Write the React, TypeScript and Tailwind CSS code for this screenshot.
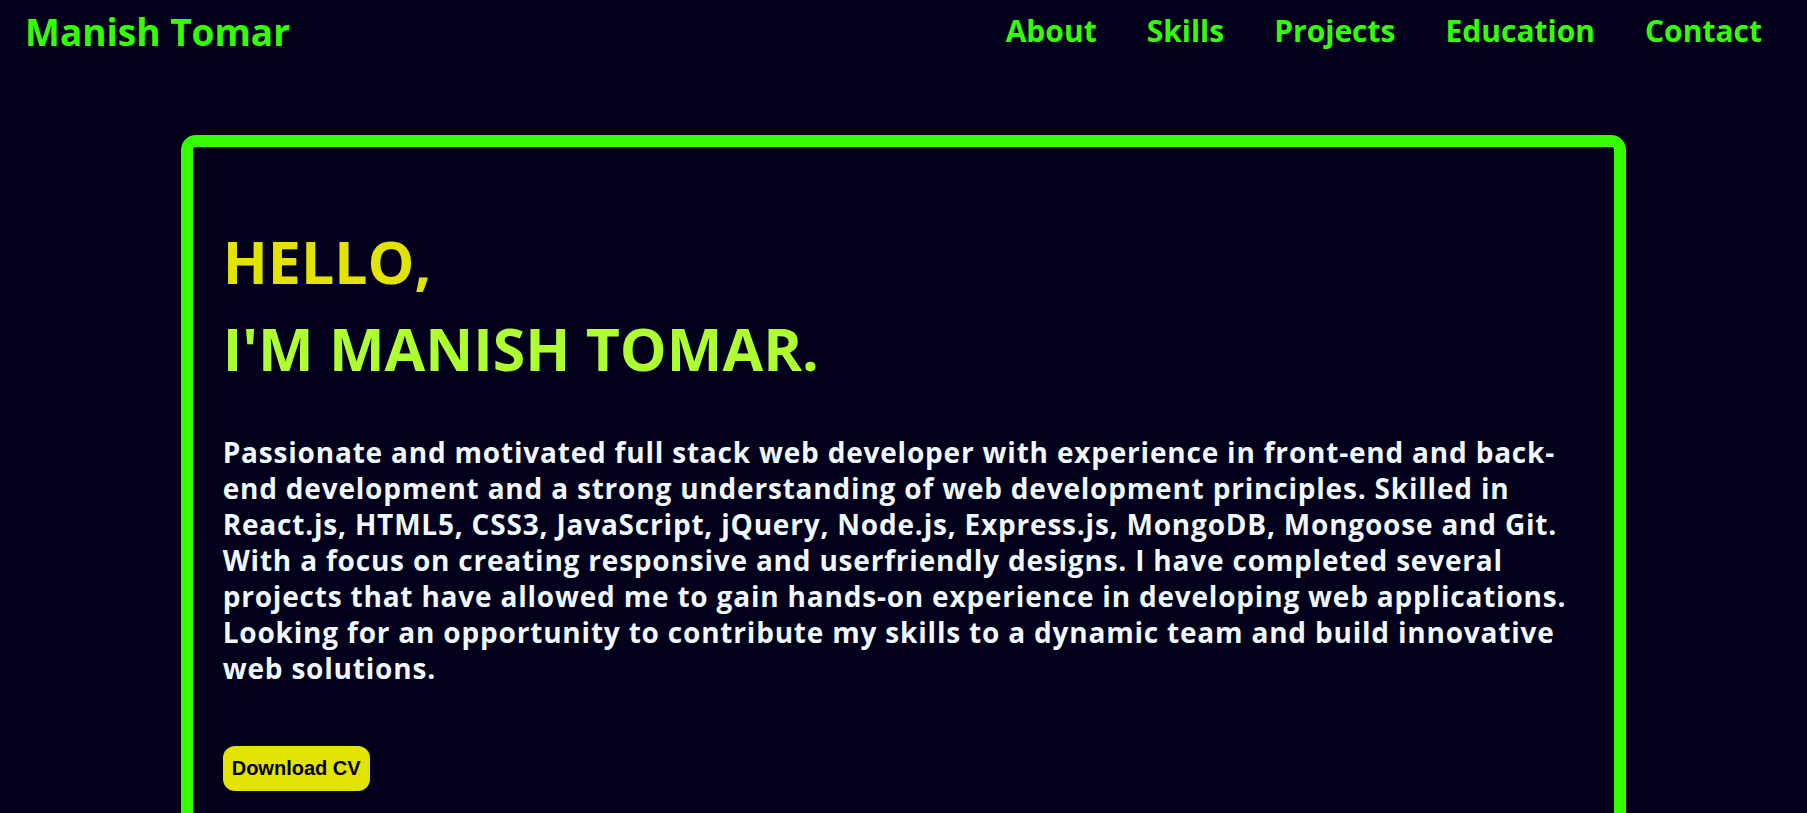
const navLinks = ["About", "Skills", "Projects", "Education", "Contact"];

export default function App() {
  return (
    <div className="min-h-screen bg-[#02001a] font-['Open_Sans',sans-serif] font-bold">
      <header className="flex h-[62px] items-center justify-between pl-[25px] pr-[45px]">
        <a href="#" className="text-[37px] leading-none text-[#33ff00]">
          Manish Tomar
        </a>
        <nav className="flex gap-[50px]">
          {navLinks.map((link) => (
            <a key={link} href={`#${link.toLowerCase()}`} className="text-[30px] leading-none text-[#33ff00]">
              {link}
            </a>
          ))}
        </nav>
      </header>

      <main className="pt-[73px] pb-20">
        <section
          id="about"
          className="mx-auto w-[80%] rounded-[15px] border-[12px] border-[#33ff00] px-[30px] pt-[71px] pb-16"
        >
          <h1 className="text-[59px] leading-[87px]">
            <span className="block text-[#e3e300]">HELLO,</span>
            <span className="block text-[#adff2f]">I'M MANISH TOMAR.</span>
          </h1>
          <p className="mt-[42px] text-[28px] leading-[36px] tracking-[0.8px] text-[#f0f8ff]">
            Passionate and motivated full stack web developer with experience in front-end and back-end
            development and a strong understanding of web development principles. Skilled in React.js, HTML5,
            CSS3, JavaScript, jQuery, Node.js, Express.js, MongoDB, Mongoose and Git. With a focus on creating
            responsive and userfriendly designs. I have completed several projects that have allowed me to gain
            hands-on experience in developing web applications. Looking for an opportunity to contribute my skills
            to a dynamic team and build innovative web solutions.
          </p>
          <button className="mt-[60px] rounded-[12px] bg-[#e3e300] px-[9px] py-[11px] font-['Liberation_Sans',Arial,sans-serif] text-[20px] leading-[23px] font-bold text-black">
            Download CV
          </button>
        </section>
      </main>
    </div>
  );
}
